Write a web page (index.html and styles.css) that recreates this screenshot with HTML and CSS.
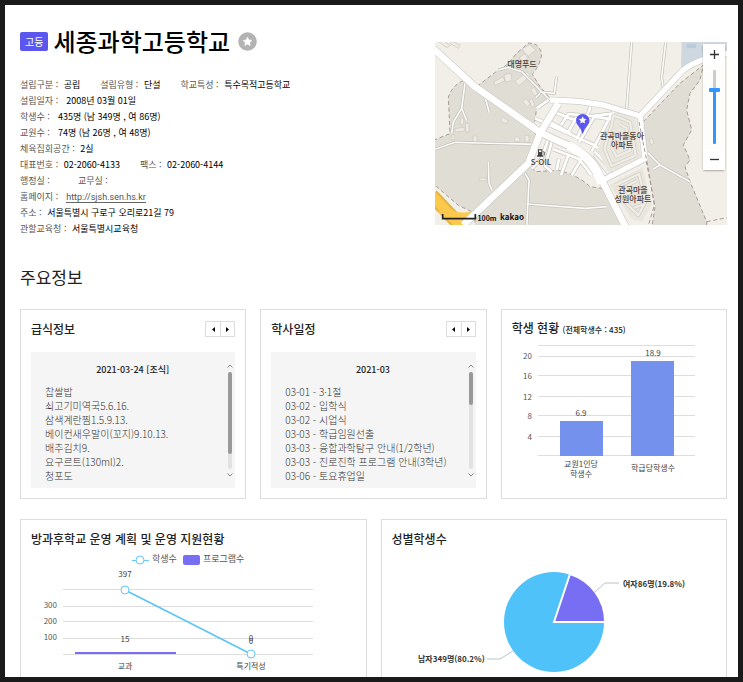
FILE: index.html
```html
<!DOCTYPE html>
<html lang="ko">
<head>
    <meta charset="UTF-8">
    <meta name="viewport" content="width=device-width, initial-scale=1.0">
    <title>세종과학고등학교</title>
    <link rel="stylesheet" href="styles.css">
</head>
<body>
    <main class="page">
        <section class="school">
            <div class="school-info">
                <div class="school-title">
                    <span class="badge">고등</span>
                    <h1>세종과학고등학교</h1>
                    <button type="button" class="favorite" aria-label="관심학교">
                        <svg width="19" height="19" viewBox="0 0 19 19"><circle cx="9.5" cy="9.5" r="9.3" fill="#b3b3b3"/><path d="M9.5 5.2l1.4 2.7 3 .5-2.2 2.1.5 3-2.7-1.4-2.7 1.4.5-3-2.2-2.1 3-.5z" fill="#fff" stroke="#fff" stroke-width=".6" stroke-linejoin="round"/></svg>
                    </button>
                </div>
                <ul class="facts">
                    <li><span>설립구분 : <b>공립</b></span><span>설립유형 : <b>단설</b></span><span>학교특성 : <b>특수목적고등학교</b></span></li>
                    <li><span>설립일자 : <b>&nbsp;2008년 03월 01일</b></span></li>
                    <li><span>학생수 : <b>&nbsp;435명 (남 349명 , 여 86명)</b></span></li>
                    <li><span>교원수 : <b>&nbsp;74명 (남 26명 , 여 48명)</b></span></li>
                    <li><span>체육집회공간 : <b>2실</b></span></li>
                    <li><span>대표번호 : <b>02-2060-4133</b></span><span>팩스 : <b>02-2060-4144</b></span></li>
                    <li><span>행정실 : <b>&nbsp;</b></span><span>교무실 :</span></li>
                    <li><span>홈페이지 : &nbsp;<a href="http://sjsh.sen.hs.kr">http://sjsh.sen.hs.kr</a></span></li>
                    <li><span>주소 : <b>서울특별시 구로구 오리로21길 79</b></span></li>
                    <li><span>관할교육청 : <b>서울특별시교육청</b></span></li>
                </ul>
            </div>

            <div class="map">
                <svg class="map-canvas" viewBox="0 0 292 183" preserveAspectRatio="xMidYMid slice">
                    <svg width="292" height="183" viewBox="0 0 876 549">
                        <rect width="876" height="551" fill="#f2efe8"/>
                        <!-- hills -->
                        <g fill="#e0ddd4" stroke="#a99c95" stroke-width="3" stroke-dasharray="12 8">
                            <path d="M-5 295L45 275 40 165Q55 125 90 114L125 134 190 84 215 69 245 34 280 4Q310 0 320 34Q318 65 292 97L315 134 348 172 305 199 295 264 305 284 280 364 300 389 370 385Q430 400 465 434L500 439 585 560H120V514L70 490 5 434-5 430z"/>
                            <path d="M625 239L735 124 805 69 795 114 765 154 755 204 770 264 745 309 765 354 750 374 765 419 815 539V560H650L660 494 635 364z"/>
                        </g>
                        <path d="M740 0H876V36L805 46 738 80z" fill="#cfd8e1"/>
                        <path d="M755 5h28v14h-28zM800 12h25v14h-25z" fill="#bccbd9"/>
                        <path d="M815 539l61-12" fill="none" stroke="#a99c95" stroke-width="3" stroke-dasharray="12 8"/>

                        <!-- buildings -->
                        <g fill="#eeebe4" stroke="#cbc7be" stroke-width="2">
                            <path d="M5 -5l30 22 12-6-28-20zM45 5l26 14 5-9-24-12zM176 120l28-16 6 12-30 14zM207 98l20-4 4 22-20 4zM240 118l36-28 10 10-34 32zM262 20l22-12 18 16-26 22zM252 48l20-14 10 12-18 12z"/>
                            <path d="M286 142l12-6 10 20-10 6zM262 178l12-8 12 16-10 8zM282 174l10-4 8 22-10 4zM258 222l18 6-4 12-18-6zM202 226l18 10-6 10-18-10zM76 228h10v20h-10zM92 244h10v26h-10zM60 260l28-4v11l-28 3zM50 278h8v16h-8zM114 282h12v24h-12zM238 288l8-5 8 6v10h-14zM270 280h12v20h-12zM132 408h22v8h-22zM643 292l10-4 4 16-10 4z"/>
                        </g>

                        <!-- side roads, grey casing below the white surface -->
                        <g fill="none">
                            <path d="M0 322L60 301 130 303 300 307M90 124L80 199 55 240 50 274M80 199L95 236M160 359L162 424 172 446M270 394L282 414 275 560M275 486L450 499 515 494M150 164L163 212M365 104L358 154 315 150M315 154l-12 12M190 84L220 76 260 89 345 174M590 0L575 199M692 0L680 105 685 139M635 329L675 369 765 419M675 369l-20 12" stroke="#c2c0bc" stroke-width="9"/>
                            <path d="M0 322L60 301 130 303 300 307M90 124L80 199 55 240 50 274M80 199L95 236M160 359L162 424 172 446M270 394L282 414 275 560M275 486L450 499 515 494M150 164L163 212M365 104L358 154 315 150M315 154l-12 12M190 84L220 76 260 89 345 174M590 0L575 199M692 0L680 105 685 139M635 329L675 369 765 419M675 369l-20 12" stroke="#fafaf8" stroke-width="5"/>
                        </g>

                        <!-- town streets -->
                        <g fill="none" stroke-linejoin="round">
                            <path d="M305 199L340 174M300 229L350 252 475 308 560 372M348 206L432 240M345 240L410 276M378 250L400 216 470 222 540 214M400 270L425 225M425 292L465 200 465 180M432 302L478 224 530 232M470 328L530 216 545 196M340 290L320 350 290 380M350 300L330 372 350 390M355 322L430 350 452 376 470 400M372 350L365 385M400 340L378 400M440 350L410 400M470 345L520 410M480 330L540 390" stroke="#c8c5c0" stroke-width="12"/>
                            <path d="M305 199L340 174M300 229L350 252 475 308 560 372M348 206L432 240M345 240L410 276M378 250L400 216 470 222 540 214M400 270L425 225M425 292L465 200 465 180M432 302L478 224 530 232M470 328L530 216 545 196M340 290L320 350 290 380M350 300L330 372 350 390M355 322L430 350 452 376 470 400M372 350L365 385M400 340L378 400M440 350L410 400M470 345L520 410M480 330L540 390" stroke="#fff" stroke-width="8"/>
                        </g>

                        <!-- apartment blocks -->
                        <path d="M540 208L602 232 618 346 522 392 486 324z" fill="#e9e6de"/>
                        <path d="M524 428L622 376 650 490 620 540 590 530z" fill="#e9e6de"/>
                        <g fill="none" stroke-linejoin="round">
                            <path d="M535 220L585 240 602 340 530 372 508 320 530 250zM552 246L574 258 586 326 544 344 530 315 545 270M556 278l10 38M540 430L612 396 632 478 610 520 560 470M560 440l46-24M570 458l44-20M584 478l36-14M596 498l28-10" stroke="#d0cdc5" stroke-width="11"/>
                            <path d="M535 220L585 240 602 340 530 372 508 320 530 250zM552 246L574 258 586 326 544 344 530 315 545 270M556 278l10 38M540 430L612 396 632 478 610 520 560 470M560 440l46-24M570 458l44-20M584 478l36-14M596 498l28-10" stroke="#f0ede6" stroke-width="7"/>
                        </g>

                        <!-- main roads -->
                        <path d="M-10 460L90 565" fill="none" stroke="#e3b43f" stroke-width="42"/>
                        <path d="M-10 460L90 565M20 500Q60 535 110 524" fill="none" stroke="#fdc94c" stroke-width="30"/>
                        <g fill="none" stroke="#cfccc8" stroke-linejoin="round">
                            <path d="M-5 20L120 134 305 264Q345 288 405 312Q480 345 505 424L572 555M85 549L280 364 315 274 370 184" stroke-width="24"/>
                            <path d="M345 174L430 178 505 189 615 222 735 94Q770 55 880 34M615 222L630 350 505 414" stroke-width="20"/>
                        </g>
                        <g fill="none" stroke="#fff" stroke-linejoin="round">
                            <path d="M-5 20L120 134 305 264Q345 288 405 312Q480 345 505 424L572 555M85 549L280 364 315 274 370 184" stroke-width="20"/>
                            <path d="M345 174L430 178 505 189 615 222 735 94Q770 55 880 34M615 222L630 350 505 414" stroke-width="16"/>
                            <path d="M400 310Q475 345 500 424" stroke-width="26"/>
                        </g>
                        <path d="M612 240L640 380 658 490 640 551" fill="none" stroke="#a99c95" stroke-width="3" stroke-dasharray="12 8"/>

                        <!-- petrol station -->
                        <path d="M309 322h13v18h-13zM306 340h19v4h-19zM324 326l5 4v10h-3v-8" fill="#444"/>
                        <path d="M312 325h7v5h-7z" fill="#fff"/>
                        <!-- school marker -->
                        <path d="M443 276Q437 258 428 249A20 20 0 1 1 458 249Q449 258 443 276z" fill="#5b57ee"/>
                        <path d="M443 223l3.5 7 8 1.2-5.8 5.5 1.4 7.8-7.1-3.7-7.1 3.7 1.4-7.8-5.8-5.5 8-1.2z" fill="#fff"/>
                        <path d="M23 516v14h98v-14" fill="none" stroke="#222" stroke-width="5"/>
                    </svg>
                    <g class="map-label">
                        <text x="87" y="25">대명푸드</text>
                        <text x="187" y="97">관곡마을동아</text>
                        <text x="187" y="106">아파트</text>
                        <text x="198" y="151">관곡마을</text>
                        <text x="198" y="160">성원아파트</text>
                        <text x="106" y="123">S-OIL</text>
                        <text x="52" y="179" class="map-mark">100m</text>
                        <text x="77" y="178" class="map-mark map-brand">kakao</text>
                    </g>
                </svg>
                <div class="zoom">
                    <button type="button" aria-label="확대"><svg width="9" height="9" viewBox="0 0 9 9"><path d="M0 4.5h9M4.5 0v9" stroke="#333" stroke-width="1.3"/></svg></button>
                    <input type="range" class="zoom-level" min="0" max="100" value="75" aria-label="지도 배율">
                    <button type="button" aria-label="축소"><svg width="9" height="9" viewBox="0 0 9 9"><path d="M0 4.5h9" stroke="#333" stroke-width="1.3"/></svg></button>
                </div>
            </div>
        </section>

        <h2>주요정보</h2>

        <div class="cards three">
            <section class="card">
                <header>
                    <h3>급식정보</h3>
                    <div class="pager">
                        <button type="button" aria-label="이전"><svg width="3" height="5" viewBox="0 0 3 5"><path d="M3 0v5L0 2.5z"/></svg></button>
                        <button type="button" aria-label="다음"><svg width="3" height="5" viewBox="0 0 3 5"><path d="M0 0v5l3-2.5z"/></svg></button>
                    </div>
                </header>
                <div class="panel">
                    <div class="panel-body">
                        <h4>2021-03-24 [조식]</h4>
                        <ul>
                            <li>찹쌀밥</li>
                            <li>쇠고기미역국5.6.16.</li>
                            <li>삼색계란찜1.5.9.13.</li>
                            <li>베이컨새우말이(꼬지)9.10.13.</li>
                            <li>배추김치9.</li>
                            <li>요구르트(130ml)2.</li>
                            <li>청포도</li>
                        </ul>
                    </div>
                    <div class="scroll">
                        <svg width="6" height="4" viewBox="0 0 6 4"><path d="M.5 3.5L3 1l2.5 2.5"/></svg>
                        <div class="scroll-track"><div class="scroll-thumb meal-thumb"></div></div>
                        <svg width="6" height="4" viewBox="0 0 6 4"><path d="M.5.5L3 3 5.5.5"/></svg>
                    </div>
                </div>
            </section>

            <section class="card">
                <header>
                    <h3>학사일정</h3>
                    <div class="pager">
                        <button type="button" aria-label="이전"><svg width="3" height="5" viewBox="0 0 3 5"><path d="M3 0v5L0 2.5z"/></svg></button>
                        <button type="button" aria-label="다음"><svg width="3" height="5" viewBox="0 0 3 5"><path d="M0 0v5l3-2.5z"/></svg></button>
                    </div>
                </header>
                <div class="panel">
                    <div class="panel-body">
                        <h4>2021-03</h4>
                        <ul>
                            <li>03-01 - 3·1절</li>
                            <li>03-02 - 입학식</li>
                            <li>03-02 - 시업식</li>
                            <li>03-03 - 학급임원선출</li>
                            <li>03-03 - 융합과학탐구 안내(1/2학년)</li>
                            <li>03-03 - 진로진학 프로그램 안내(3학년)</li>
                            <li>03-06 - 토요휴업일</li>
                        </ul>
                    </div>
                    <div class="scroll">
                        <svg width="6" height="4" viewBox="0 0 6 4"><path d="M.5 3.5L3 1l2.5 2.5"/></svg>
                        <div class="scroll-track"><div class="scroll-thumb"></div></div>
                        <svg width="6" height="4" viewBox="0 0 6 4"><path d="M.5.5L3 3 5.5.5"/></svg>
                    </div>
                </div>
            </section>

            <section class="card">
                <header>
                    <h3>학생 현황 <small>(전체학생수 : 435)</small></h3>
                </header>
                <svg class="chart" viewBox="0 0 204 151" preserveAspectRatio="xMinYMin meet">
                    <path class="grid" d="M26 8.5h157M26 19.5h157M26 38.5h157M26 59.5h157M26 78.5h157M26 99.5h157M26 118.5h157"/>
                    <g class="tick">
                        <text x="20" y="22">20</text>
                        <text x="20" y="42">16</text>
                        <text x="20" y="63">12</text>
                        <text x="20" y="82">8</text>
                        <text x="20" y="103">4</text>
                    </g>
                    <rect x="48" y="84" width="43" height="35" fill="#7391ed"/>
                    <rect x="119" y="24" width="43" height="95" fill="#7391ed"/>
                    <g class="label">
                        <text x="69" y="79">6.9</text>
                        <text x="141" y="19">18.9</text>
                        <text x="69" y="130">교원1인당</text>
                        <text x="69" y="140">학생수</text>
                        <text x="141" y="134">학급당학생수</text>
                    </g>
                </svg>
            </section>
        </div>

        <div class="cards two">
            <section class="card">
                <header>
                    <h3>방과후학교 운영 계획 및 운영 지원현황</h3>
                </header>
                <svg class="chart" viewBox="0 0 324 151" preserveAspectRatio="xMinYMin meet">
                    <path d="M101 13.5h17" stroke="#66c8f7"/>
                    <circle class="dot" cx="109" cy="13" r="4"/>
                    <rect x="152" y="8" width="17" height="10" rx="2" fill="#786ef3"/>
                    <g class="legend">
                        <text x="121" y="15">학생수</text>
                        <text x="172" y="15">프로그램수</text>
                    </g>
                    <path class="grid" d="M32 42.5h250M32 59.5h250M32 74.5h250M32 91.5h250M32 107.5h250"/>
                    <g class="tick">
                        <text x="26" y="61">300</text>
                        <text x="26" y="77">200</text>
                        <text x="26" y="93">100</text>
                    </g>
                    <rect x="44" y="105" width="101" height="2" fill="#786ef3"/>
                    <path d="M94 43L220 107" stroke="#5bc4f8" stroke-width="1.5"/>
                    <circle class="dot" cx="94" cy="43" r="4"/>
                    <circle class="dot" cx="220" cy="107" r="4"/>
                    <g class="label">
                        <text x="94" y="30">397</text>
                        <text x="94" y="95">15</text>
                        <text x="220" y="94">0</text>
                        <text x="220" y="97">0</text>
                        <text x="94" y="122">교과</text>
                        <text x="220" y="122">특기적성</text>
                    </g>
                </svg>
            </section>

            <section class="card">
                <header>
                    <h3>성별학생수</h3>
                </header>
                <svg class="chart" viewBox="0 0 324 151" preserveAspectRatio="xMinYMin meet">
                    <circle cx="162" cy="75" r="50" fill="#4fc2f9"/>
                    <path d="M162 75L178 27A50 50 0 0 1 213 75z" fill="#786ef3" stroke="#fff" stroke-width="2"/>
                    <path d="M203 45l10-9h14M121 104l-13 8H95" fill="none" stroke="#b9c3cf"/>
                    <g class="pie-label">
                        <text x="231" y="40">여자86명(19.8%)</text>
                        <text x="26" y="115">남자349명(80.2%)</text>
                    </g>
                </svg>
            </section>
        </div>
    </main>
</body>
</html>
```
FILE: styles.css
```css
* {
    box-sizing: border-box;
    margin: 0;
    padding: 0;
}

body {
    height: 100vh;
    overflow: hidden;
    border: 5px solid #1a1a1a;
    background-color: #fff;
    color: #222;
    font-family: "Noto Sans CJK KR", "Noto Sans", sans-serif;
    font-size: 9px;
}

ul {
    list-style: none;
}

button {
    display: flex;
    align-items: center;
    justify-content: center;
    border: none;
    background: none;
    cursor: pointer;
}

.page {
    padding: 20px 11px 20px 15px;
}

/* school header */
.school {
    display: flex;
    justify-content: space-between;
}

.school-title {
    display: flex;
    align-items: center;
    height: 32px;
    margin-bottom: 20px;
}

.badge {
    padding: 0 5px;
    border-radius: 2px;
    background-color: #5b57ee;
    color: #fff;
    font-size: 10px;
    line-height: 19px;
}

h1 {
    margin: 0 8px 0 5px;
    color: #000;
    font-size: 24px;
    font-weight: 500;
    line-height: 32px;
}

.facts li {
    display: flex;
    gap: 20px;
    color: #555;
    line-height: 16px;
}

.facts b {
    margin-left: 3px;
    color: #000;
    font-weight: 400;
}

.facts a {
    margin-left: 3px;
    border-bottom: 1px solid #666;
    color: #555;
    font-family: Roboto, sans-serif;
    text-decoration: none;
}

.map {
    position: relative;
    flex: 0 0 292px;
    height: 183px;
    margin-top: 17px;
}

.map-canvas {
    display: block;
    width: 100%;
    height: 100%;
}

.map-label {
    fill: #4c4038;
    font-size: 8px;
    font-weight: 500;
    text-anchor: middle;
}

.map-mark {
    fill: #111;
    font-size: 7px;
    font-weight: 700;
}

.map-brand {
    font-size: 8px;
}

.zoom {
    position: absolute;
    top: 2px;
    right: 2px;
    width: 22px;
    border-radius: 2px;
    background-color: rgba(255, 255, 255, 0.85);
    box-shadow: 0 1px 2px rgba(0, 0, 0, 0.3);
}

.zoom button {
    width: 22px;
    height: 21px;
    background-color: #fff;
}

.zoom-level {
    display: block;
    width: 11px;
    height: 74px;
    margin: 5px auto;
    appearance: none;
    background: none;
    writing-mode: vertical-lr;
    direction: rtl;
}

.zoom-level::-webkit-slider-runnable-track {
    width: 3px;
    border-radius: 1px;
    background: linear-gradient(#ccc 25%, #3396ff 25%);
}

.zoom-level::-webkit-slider-thumb {
    width: 11px;
    height: 4px;
    margin-left: -4px;
    appearance: none;
    border-radius: 1px;
    background-color: #3396ff;
}

h2 {
    margin: 26px 0 18px;
    font-size: 17px;
    font-weight: 400;
    line-height: 28px;
}

/* cards */
.cards {
    display: grid;
    gap: 14px;
    margin-bottom: 20px;
}

.three {
    grid-template-columns: repeat(3, 1fr);
}

.two {
    grid-template-columns: repeat(2, 1fr);
}

.card {
    min-width: 0;
    padding: 11px 10px 10px;
    border: 1px solid #ddd;
}

.card header {
    display: flex;
    align-items: center;
    justify-content: space-between;
    height: 16px;
}

h3 {
    font-size: 12px;
    font-weight: 500;
    line-height: 16px;
    white-space: nowrap;
}

h3 small {
    font-size: 8px;
}

.pager {
    display: flex;
    border: 1px solid #ddd;
}

.pager button {
    width: 14px;
    height: 14px;
}

.pager button + button {
    border-left: 1px solid #ddd;
}

.panel {
    display: flex;
    height: 136px;
    margin-top: 15px;
    background-color: #f5f5f5;
}

.panel-body {
    flex: 1;
    min-width: 0;
    padding: 10px 0 0 14px;
    overflow: hidden;
}

h4 {
    margin-bottom: 7px;
    padding-right: 5px;
    font-size: 9px;
    font-weight: 500;
    line-height: 16px;
    text-align: center;
}

.panel li {
    color: #333;
    font-size: 10px;
    font-weight: 300;
    line-height: 14px;
    white-space: nowrap;
}

.scroll {
    display: flex;
    flex-direction: column;
    align-items: center;
    gap: 4px;
    width: 10px;
    padding: 12px 0 11px;
}

.scroll svg {
    fill: none;
    stroke: #888;
}

.scroll-track {
    flex: 1;
    width: 4px;
    border-radius: 2px;
    background-color: #e2e2e2;
}

.scroll-thumb {
    height: 33px;
    border-radius: 2px;
    background-color: #999;
}

.meal-thumb {
    height: 82px;
}

/* charts */
.chart {
    display: block;
    width: 100%;
    height: 151px;
    font-size: 8px;
}

.grid {
    stroke: #ddd;
}

.tick {
    fill: #555;
    text-anchor: end;
}

.label {
    fill: #444;
    text-anchor: middle;
}

.legend {
    fill: #555;
    font-size: 9px;
}

.dot {
    fill: #fff;
    stroke: #66c8f7;
}

.pie-label {
    fill: #333;
    font-weight: 700;
}
```
